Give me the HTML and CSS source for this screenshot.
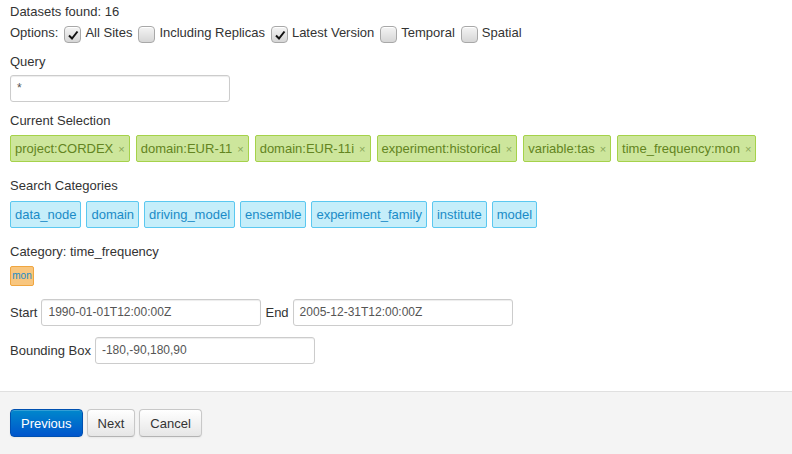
FILE: index.html
```html
<!DOCTYPE html>
<html>
<head>
<meta charset="utf-8">
<link rel="stylesheet" href="styles.css">
</head>
<body>
<div class="content">
  <div class="found">Datasets found: 16</div>
  <div class="options">
    <span>Options:</span>
    <span class="cb on"><svg viewBox="0 0 16 16" width="16" height="16"><path d="M4 8.5 L7 11.5 L12.5 4.5" fill="none" stroke="#111" stroke-width="2"/></svg></span><span>All Sites</span>
    <span class="cb"></span><span>Including Replicas</span>
    <span class="cb on"><svg viewBox="0 0 16 16" width="16" height="16"><path d="M4 8.5 L7 11.5 L12.5 4.5" fill="none" stroke="#111" stroke-width="2"/></svg></span><span>Latest Version</span>
    <span class="cb"></span><span>Temporal</span>
    <span class="cb"></span><span>Spatial</span>
  </div>

  <div class="label l-query">Query</div>
  <div class="input query">*</div>

  <div class="label l-sel">Current Selection</div>
  <div class="tags gtags">
    <span class="tag green">project:CORDEX<span class="x">×</span></span>
    <span class="tag green">domain:EUR-11<span class="x">×</span></span>
    <span class="tag green">domain:EUR-11i<span class="x">×</span></span>
    <span class="tag green">experiment:historical<span class="x">×</span></span>
    <span class="tag green">variable:tas<span class="x">×</span></span>
    <span class="tag green">time_frequency:mon<span class="x">×</span></span>
  </div>

  <div class="label l-cat">Search Categories</div>
  <div class="tags">
    <span class="tag blue">data_node</span>
    <span class="tag blue">domain</span>
    <span class="tag blue">driving_model</span>
    <span class="tag blue">ensemble</span>
    <span class="tag blue">experiment_family</span>
    <span class="tag blue">institute</span>
    <span class="tag blue">model</span>
  </div>

  <div class="label l-tf">Category: time_frequency</div>
  <div class="tags"><span class="tag orange">mon</span></div>

  <div class="row r-time">
    <span class="rl">Start</span><div class="input date">1990-01-01T12:00:00Z</div>
    <span class="rl">End</span><div class="input date">2005-12-31T12:00:00Z</div>
  </div>
  <div class="row r-bbox">
    <span class="rl">Bounding Box</span><div class="input date">-180,-90,180,90</div>
  </div>
</div>
<div class="footer">
  <button class="btn primary">Previous</button>
  <button class="btn">Next</button>
  <button class="btn">Cancel</button>
</div>
</body>
</html>
```

FILE: styles.css
```css
html, body {
  margin: 0;
  padding: 0;
  background: #fff;
  font-family: "Liberation Sans", Arial, sans-serif;
  font-size: 13px;
  line-height: 20px;
  color: #333;
}
.content {
  padding: 2px 10px 0 10px;
  height: 391px;
  box-sizing: border-box;
}
.found { height: 20px; }
.options {
  display: flex;
  align-items: center;
  height: 20px;
  margin-top: 1px;
}
.cb {
  display: inline-block;
  width: 15px;
  height: 15px;
  margin: 2px 4px 0 6px;
  border: 1px solid #a8a8a8;
  border-radius: 4px;
  background: linear-gradient(#f4f4f4, #d6d6d6);
  box-shadow: inset 0 1px 0 #fff;
  position: relative;
}
.cb:first-of-type { margin-left: 5px; }
.cb svg { position: absolute; left: 0; top: 0; }
.label { height: 20px; }
.l-query { margin-top: 9px; margin-bottom: 3px; }
.l-sel { margin-top: 9px; margin-bottom: 4px; }
.l-cat { margin-top: 14px; margin-bottom: 5px; }
.l-tf { margin-top: 14px; margin-bottom: 4px; }
.input {
  box-sizing: border-box;
  height: 27px;
  border: 1px solid #ccc;
  border-radius: 3px;
  padding: 3px 6px;
  color: #555;
  background: #fff;
  box-shadow: inset 0 1px 1px rgba(0,0,0,0.075);
  font-size: 12px;
  line-height: 19px;
}
.query { width: 220px; }
.tags {
  display: flex;
  flex-wrap: wrap;
  gap: 5px;
}
.gtags { gap: 6px; }
.tag {
  box-sizing: border-box;
  display: inline-flex;
  align-items: center;
  border-radius: 2px;
  padding: 0 4px;
  font-size: 13px;
}
.green {
  height: 27px;
  background: #cde69c;
  border: 1px solid #a5d24a;
  color: #638421;
  padding: 0 4px 0 4px;
}
.green .x {
  color: #8aa85a;
  font-size: 11px;
  margin-left: 5px;
  margin-right: 0;
}
.blue {
  height: 27px;
  background: #c5eefa;
  border: 1px solid #5bc8f0;
  color: #1a8bc7;
}
.orange {
  height: 20px;
  background: #f8c67f;
  border: 1px solid #f0a640;
  color: #1a8bc7;
  font-size: 10px;
  padding: 0 2px;
  width: 24px;
  justify-content: center;
}
.row {
  display: flex;
  align-items: center;
  gap: 4px;
}
.r-time { margin-top: 13px; }
.r-bbox { margin-top: 11px; }
.rl { color: #333; }
.date { width: 220px; }
.footer {
  border-top: 1px solid #e0e0e0;
  background: #f4f4f4;
  height: 62px;
  padding: 17px 10px 0 10px;
  display: flex;
  align-items: flex-start;
  gap: 4px;
}
.btn {
  font-family: "Liberation Sans", Arial, sans-serif;
  font-size: 13px;
  height: 28px;
  padding: 0 10px;
  border: 1px solid #c8c8c8;
  border-bottom-color: #b3b3b3;
  border-radius: 4px;
  background: linear-gradient(#ffffff, #e6e6e6);
  color: #333;
  box-shadow: inset 0 1px 0 rgba(255,255,255,0.2), 0 1px 2px rgba(0,0,0,0.05);
}
.btn.primary {
  padding: 0 10px;
  background: linear-gradient(#0088cc, #0055cc);
  border-color: #0050b0;
  color: #fff;
}
```
